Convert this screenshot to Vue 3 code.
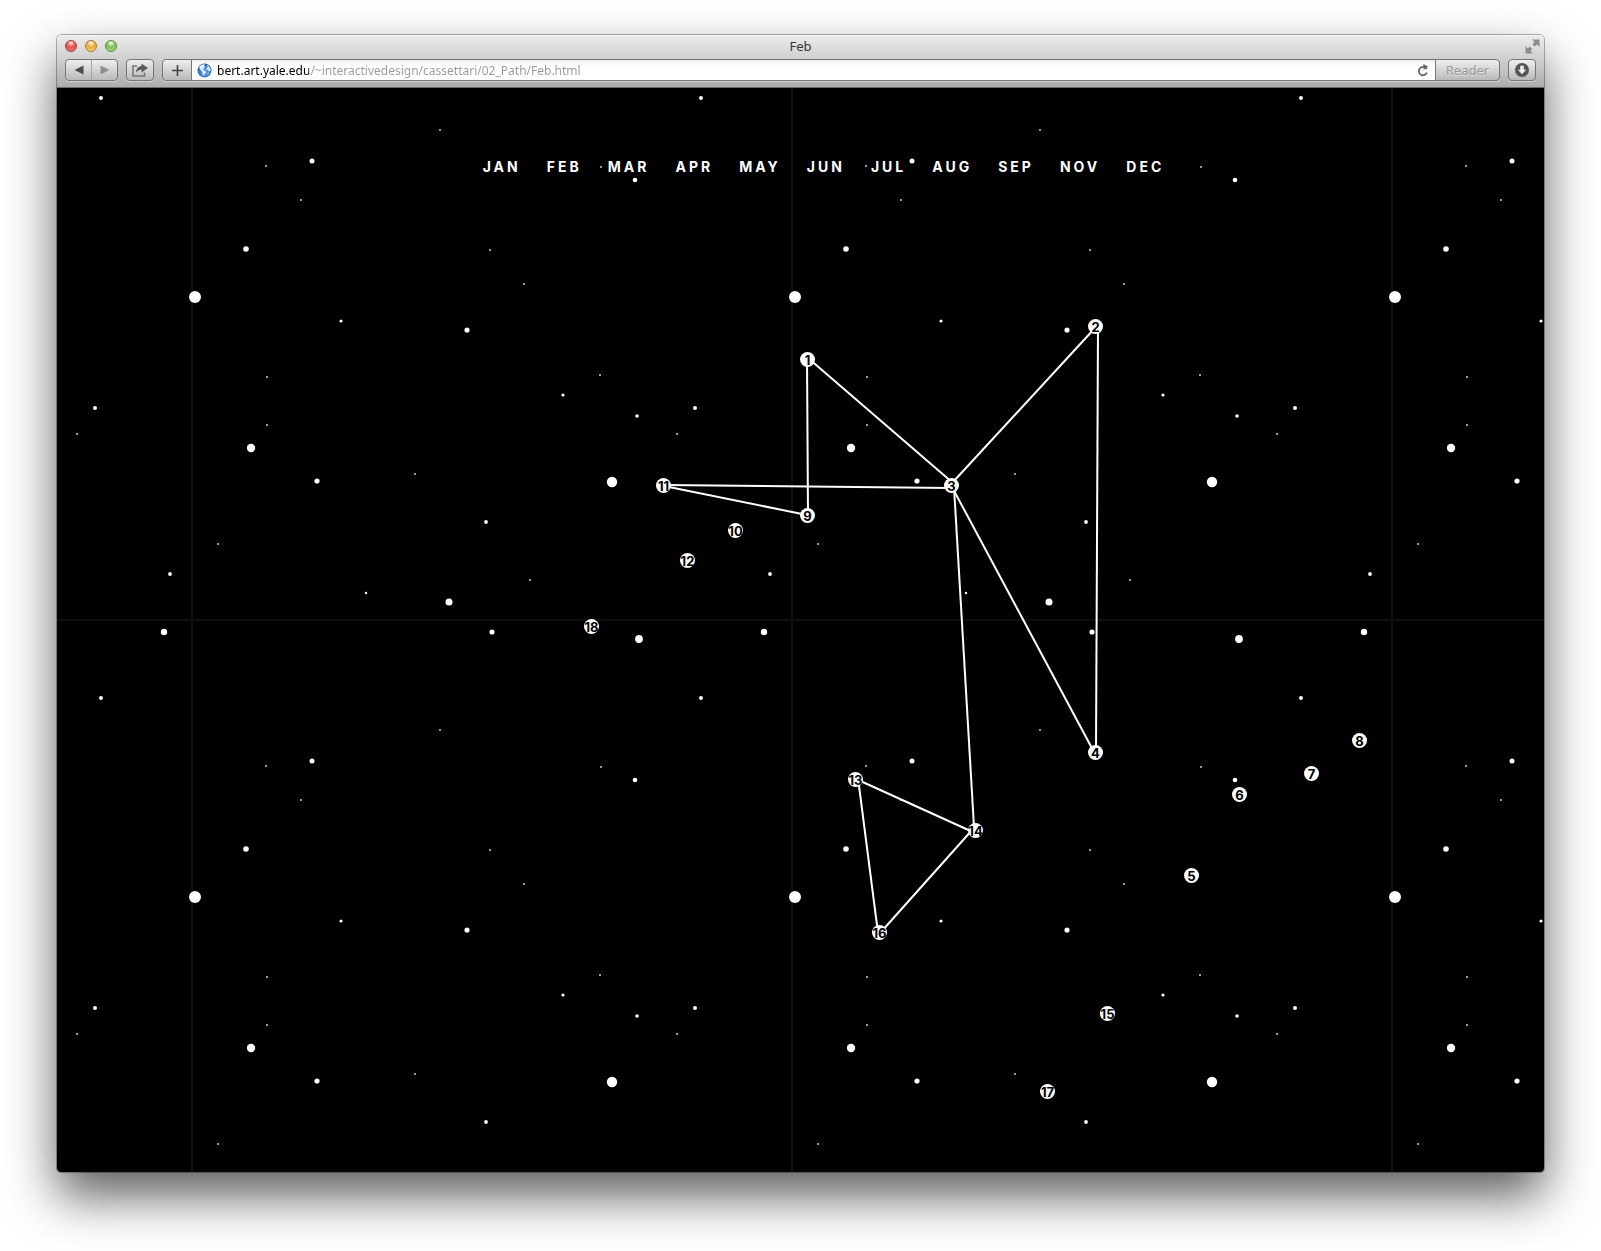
<template>
  <div class="desktop">
    <div class="window">
      <header class="chrome">
        <div class="titlebar">
          <div class="lights">
            <button
              v-for="light in lights"
              :key="light.name"
              type="button"
              class="light"
              :class="light.name"
              :aria-label="light.label"
            ></button>
          </div>
          <div class="title">Feb</div>
          <button type="button" class="fullscreen" aria-label="Full screen">
            <svg width="15" height="15" viewBox="0 0 15 15">
              <path d="M7 0.5h7.5V8l-2.6-2.6-2.2 2.2-2.3-2.3 2.2-2.2z" />
              <path d="M0.5 7l2.4 2.4 1.8-1.8 2.6 2.6-1.9 1.9 2.4 2.4H0.5z" />
            </svg>
          </button>
        </div>

        <div class="toolbar">
          <div class="btn-group">
            <button type="button" class="nav-btn" aria-label="Back">
              <svg width="10" height="10" viewBox="0 0 10 10"><path d="M9.5 0.5v9L0.5 5z" fill="#4c4c4c" /></svg>
            </button>
            <button type="button" class="nav-btn forward" aria-label="Forward">
              <svg width="10" height="10" viewBox="0 0 10 10"><path d="M0.5 0.5v9L9.5 5z" fill="#8e8e8e" /></svg>
            </button>
          </div>

          <button type="button" class="tool-btn" aria-label="Share">
            <svg width="18" height="14" viewBox="0 0 18 14">
              <path d="M6 3H2v10h11.5V9.5" fill="none" stroke="#777" stroke-width="1.6" />
              <path d="M10.5 0.5L17 5l-6.500 4.500V6.800C8.200 6.700 6.500 7.600 5 9.800 5.200 6 7 3.400 10.500 3z" fill="#5c5c5c" />
            </svg>
          </button>

          <form class="address" @submit.prevent>
            <button type="button" class="add-btn" aria-label="Add bookmark">
              <svg width="11" height="11" viewBox="0 0 11 11"><path d="M5.5 0v11M0 5.5h11" stroke="#444" stroke-width="1.600" /></svg>
            </button>
            <label class="field">
              <svg class="globe" width="15" height="15" viewBox="0 0 15 15">
                <defs>
                  <radialGradient id="globe-fill" cx="0.5" cy="0.6" r="0.6">
                    <stop offset="0" stop-color="#6fb8f0" />
                    <stop offset="1" stop-color="#1d55a8" />
                  </radialGradient>
                </defs>
                <circle cx="7.5" cy="7.5" r="7" fill="url(#globe-fill)" />
                <path d="M2 4.200C3.500 2 6 1 7.800 1.400L7 3l1.300.8-1.600 1.700-1 .3.500 1.500 1.800.8 1 1.400-1.700 1.400-.5 2.300-1.300-2.400.2-1.900L3.600 7z" fill="#e3f2fc" />
                <path d="M9.500 2l2 .8 1.800 2.400.4 2.600-1.800 1-1-1.800-1.500-.6.300-1.600 1.200-.5z" fill="#cfe7fa" />
                <path d="M10.500 10l1.700-.5-1.400 2.500z" fill="#cfe7fa" />
              </svg>
              <input v-model="url" class="url" type="text" aria-label="Address" spellcheck="false" />
            </label>
            <button type="button" class="reload" aria-label="Reload">
              <svg width="12" height="13" viewBox="0 0 12 13">
                <path d="M9.800 5.200A4.200 4.200 0 1 0 9.900 8.700" fill="none" stroke="#666" stroke-width="1.800" />
                <path d="M6.300 0l4.800 2.600L6.600 6z" fill="#666" />
              </svg>
            </button>
            <button type="button" class="reader">Reader</button>
          </form>

          <button type="button" class="tool-btn" aria-label="Downloads">
            <svg width="14" height="14" viewBox="0 0 14 14">
              <circle cx="7" cy="7" r="7" fill="#555" />
              <path d="M5.200 2.800h3.600v4h2.400L7 11.300 2.800 6.800h2.400z" fill="#eee" />
            </svg>
          </button>
        </div>
      </header>

      <main class="page">
        <svg class="sky" width="100%" height="100%">
          <defs>
            <pattern id="stars" x="119" y="-72" width="600" height="600" patternUnits="userSpaceOnUse">
              <rect x="15" y="0" width="2" height="600" fill="#0e0e0e" />
              <rect x="0" y="3" width="600" height="2" fill="#0e0e0e" />
              <circle
                v-for="([x, y, r], i) in stars"
                :key="i"
                :cx="x"
                :cy="y"
                :r="r"
                :fill="r > 1 ? '#fff' : '#ccc'"
              />
            </pattern>
          </defs>
          <rect width="100%" height="100%" fill="url(#stars)" />
          <line
            v-for="([x1, y1, x2, y2], i) in paths"
            :key="i"
            :x1="x1"
            :y1="y1"
            :x2="x2"
            :y2="y2"
            stroke="#fff"
            stroke-width="2"
          />
        </svg>

        <nav class="months">
          <a v-for="month in months" :key="month" :href="`#${month}`">{{ month }}</a>
        </nav>

        <span
          v-for="[day, x, y] in days"
          :key="day"
          class="day"
          :style="{ left: `${x}px`, top: `${y}px` }"
        >{{ day }}</span>
      </main>
    </div>
  </div>
</template>

<script setup>
import { ref } from 'vue';

const url = ref('bert.art.yale.edu/~interactivedesign/cassettari/02_Path/Feb.html');

const lights = [
  { name: 'red', label: 'Close' },
  { name: 'yellow', label: 'Minimize' },
  { name: 'green', label: 'Zoom' }
];

const months = ['JAN', 'FEB', 'MAR', 'APR', 'MAY', 'JUN', 'JUL', 'AUG', 'SEP', 'NOV', 'DEC'];

// [x, y, radius] inside one 600px tile
const stars = [
  [525, 82, 2], [264, 114, 1], [136, 145, 2.5], [90, 150, 1], [125, 184, 1],
  [459, 164, 2.3], [425, 151, 1], [70, 233, 2.8], [314, 234, 1], [348, 268, 1],
  [19, 281, 6], [165, 305, 1.6], [291, 314, 2.6], [91, 361, 1], [424, 359, 1],
  [387, 379, 1.6], [519, 392, 2], [461, 400, 1.8], [501, 418, 1], [91, 409, 1],
  [75, 432, 4.2], [141, 465, 2.6], [239, 458, 1], [436, 466, 5.2], [310, 506, 1.9],
  [42, 528, 1], [594, 558, 1.9], [354, 564, 1], [190, 577, 1.2], [273, 586, 3.5],
  [316, 16, 2.6], [463, 23, 3.9], [588, 16, 3.2]
];

// [x1, y1, x2, y2]
const paths = [
  [750, 270, 751, 427],
  [751, 270, 896, 395],
  [896, 394, 1038, 240],
  [1041, 240, 1039, 664],
  [607, 397, 893, 400],
  [607, 398, 750, 427],
  [895, 399, 1037, 664],
  [897, 399, 917, 739],
  [799, 691, 918, 745],
  [916, 741, 824, 844],
  [801, 690, 821, 845]
];

// [day, left, top]
const days = [
  [1, 743, 264], [2, 1031, 231], [3, 887, 390], [4, 1031, 657], [5, 1127, 780],
  [6, 1175, 699], [7, 1247, 678], [8, 1295, 645], [9, 743, 420], [10, 671, 435],
  [11, 599, 390], [12, 623, 465], [13, 791, 684], [14, 911, 735], [15, 1043, 918],
  [16, 815, 837], [17, 983, 996], [18, 527, 531]
];
</script>

<style>
body {
  margin: 0;
  background: #fff;
}
</style>

<style scoped>
.desktop {
  box-sizing: border-box;
  display: flex;
  min-height: 100vh;
  padding: 35px 57px 79px;
  overflow: hidden;
  font-family: "Noto Sans", "Open Sans", sans-serif;
}

.window {
  display: flex;
  flex: 1;
  flex-direction: column;
  min-width: 0;
  border-radius: 5px 5px 4px 4px;
  box-shadow: 0 0 0 1px rgba(0, 0, 0, 0.3), 0 24px 50px rgba(0, 0, 0, 0.64);
}

button {
  padding: 0;
  border: 0;
  background: none;
  font-family: inherit;
}

svg {
  display: block;
}

.chrome {
  box-sizing: border-box;
  height: 53px;
  border-bottom: 1px solid #6b6b6b;
  border-radius: 5px 5px 0 0;
  background: linear-gradient(#ececec, #d0d0d0 45%, #adadad);
  box-shadow: inset 0 1px 0 #f6f6f6;
}

.titlebar {
  display: grid;
  grid-template-columns: 1fr auto 1fr;
  align-items: center;
  height: 22px;
  padding: 0 4px;
}

.lights {
  display: flex;
  gap: 8px;
  padding-left: 4px;
}

.light {
  box-sizing: border-box;
  width: 12px;
  height: 12px;
  border: 1px solid;
  border-radius: 50%;
}

.red {
  border-color: #a03a38;
  background: radial-gradient(circle at 50% 20%, #fbd0cc 8%, #e4504c 45%, #f27d78);
}

.yellow {
  border-color: #a9762e;
  background: radial-gradient(circle at 50% 20%, #fdebc8 8%, #eda83c 45%, #fbd583);
}

.green {
  border-color: #5b8840;
  background: radial-gradient(circle at 50% 20%, #e1f5d4 8%, #7cbd58 45%, #b4e294);
}

.title {
  color: #333;
  font-size: 13px;
  line-height: 20px;
}

.fullscreen {
  justify-self: end;
  fill: #8c8c8c;
}

.toolbar {
  display: flex;
  gap: 8px;
  padding: 2px 8px 0;
}

.btn-group,
.tool-btn,
.address {
  box-sizing: border-box;
  height: 22px;
  border: 1px solid #777;
  border-radius: 4px;
  background: linear-gradient(#efefef, #b9b9b9);
  box-shadow: 0 1px 0 rgba(255, 255, 255, 0.4);
}

.btn-group {
  display: flex;
  width: 53px;
}

.nav-btn {
  display: flex;
  flex: 1;
  align-items: center;
  justify-content: center;
}

.forward {
  border-left: 1px solid #a5a5a5;
}

.tool-btn {
  display: flex;
  align-items: center;
  justify-content: center;
  width: 28px;
}

.address {
  display: flex;
  flex: 1;
  min-width: 0;
  overflow: hidden;
}

.add-btn {
  display: flex;
  align-items: center;
  justify-content: center;
  width: 29px;
  border-right: 1px solid #777;
}

.field {
  display: flex;
  flex: 1;
  align-items: center;
  gap: 5px;
  min-width: 0;
  padding-left: 5px;
  background: linear-gradient(#ededed, #fff 30%);
}

.globe {
  flex: none;
}

.url {
  flex: 1;
  min-width: 0;
  padding: 2px 0 0;
  border: 0;
  outline: 0;
  /* host in black, path in grey */
  background: linear-gradient(to right, #000 92px, #999 92px);
  background-clip: text;
  color: transparent;
  font-family: inherit;
  font-size: 12px;
  line-height: 18px;
}

.reload {
  display: flex;
  align-items: center;
  justify-content: center;
  width: 24px;
  background: linear-gradient(#ededed, #fff 30%);
}

.reader {
  width: 64px;
  border-left: 1px solid #777;
  color: #9a9a9a;
  font-size: 13px;
  line-height: 18px;
  text-shadow: 0 1px 0 rgba(255, 255, 255, 0.5);
}

.page {
  position: relative;
  flex: 1;
  overflow: hidden;
  border-radius: 0 0 4px 4px;
  background: #000;
}

.sky {
  position: absolute;
  inset: 0;
}

.months {
  position: relative;
  display: flex;
  justify-content: center;
  gap: 26px;
  padding: 69px 0 0 46px;
  font-family: Inter, "Liberation Sans", sans-serif;
  font-size: 14px;
  font-weight: 700;
  letter-spacing: 3px;
  line-height: 20px;
}

.months a {
  color: #fff;
  text-decoration: none;
}

.day {
  position: absolute;
  display: flex;
  justify-content: center;
  width: 15px;
  height: 15px;
  border-radius: 50%;
  background: #fff;
  color: #000;
  font-family: Inter, "Liberation Sans", sans-serif;
  font-size: 13px;
  font-weight: 700;
  line-height: 17px;
}
</style>
